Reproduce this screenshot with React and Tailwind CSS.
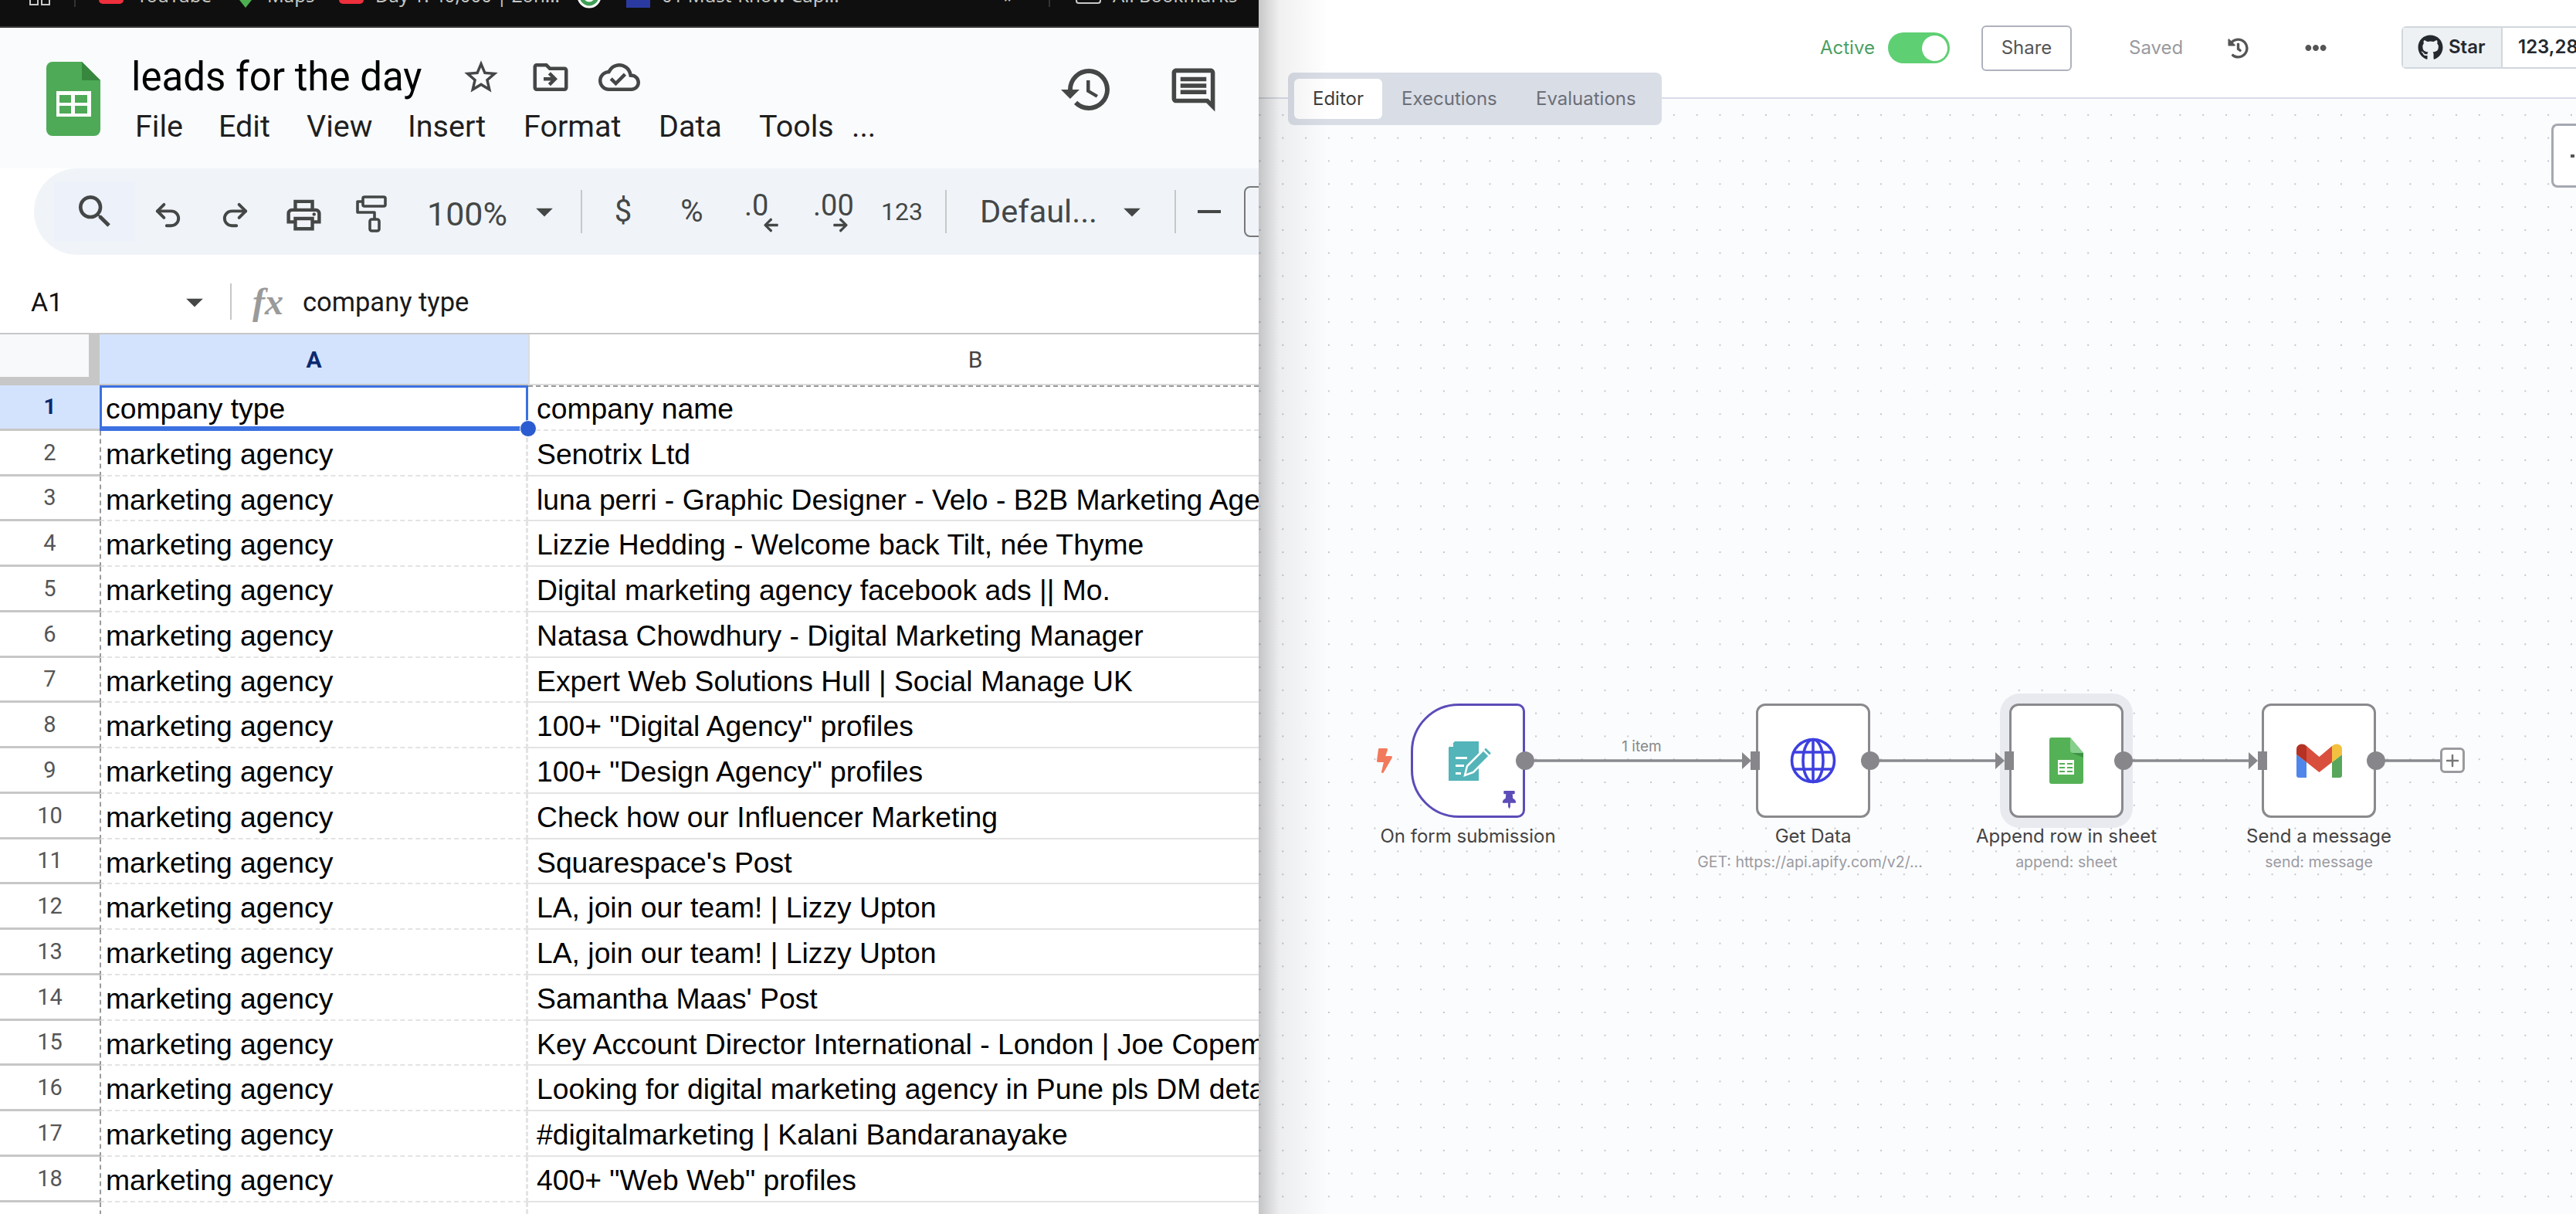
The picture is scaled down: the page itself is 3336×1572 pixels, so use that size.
import { Undo2, Redo2, Plus } from 'lucide-react';
import {
  MdSearch,
  MdOutlinePrint,
  MdOutlineStarBorder,
  MdOutlineDriveFileMove,
  MdOutlineCloudDone,
  MdHistory,
  MdOutlineComment,
  MdArrowDropDown,
} from 'react-icons/md';
import { FaArrowLeft, FaArrowRight, FaBolt, FaGithub, FaThumbtack, FaHistory, FaEllipsisH } from 'react-icons/fa';

const rows = [
  'company name',
  'Senotrix Ltd',
  'luna perri - Graphic Designer - Velo - B2B Marketing Agency',
  'Lizzie Hedding - Welcome back Tilt, née Thyme',
  'Digital marketing agency facebook ads || Mo.',
  'Natasa Chowdhury - Digital Marketing Manager',
  'Expert Web Solutions Hull | Social Manage UK',
  '100+ "Digital Agency" profiles',
  '100+ "Design Agency" profiles',
  'Check how our Influencer Marketing',
  "Squarespace's Post",
  'LA, join our team! | Lizzy Upton',
  'LA, join our team! | Lizzy Upton',
  "Samantha Maas' Post",
  'Key Account Director International - London | Joe Copeman',
  'Looking for digital marketing agency in Pune pls DM details',
  '#digitalmarketing | Kalani Bandaranayake',
  '400+ "Web Web" profiles',
  '',
];

const SheetsLogo = () => (
  <svg width="70" height="96" viewBox="0 0 70 96" className="shrink-0">
    <path d="M8 0h38l24 24v64a8 8 0 0 1-8 8H8a8 8 0 0 1-8-8V8a8 8 0 0 1 8-8z" fill="#4eaa57" />
    <path d="M46 0l24 24H46z" fill="#38873f" />
    <path d="M13 38h45v33H13z" fill="#fff" />
    <path d="M17 43h15v10H17zM37 43h16v10H37zM17 57h15v10H17zM37 57h16v10H37z" fill="#4eaa57" />
  </svg>
);

const PaintIcon = () => (
  <svg width="40" height="48" viewBox="0 0 40 48" fill="none" stroke="#444746" strokeWidth="3.6" strokeLinejoin="round">
    <rect x="9" y="2" width="29" height="12" rx="2" />
    <path d="M9 8H2v14h22v9" />
    <rect x="18" y="31" width="12" height="15" rx="2.5" />
  </svg>
);

const BookmarkBar = () => (
  <div className="flex h-[36px] w-full shrink-0 items-start overflow-hidden border-b-2 border-[#3a3a3a] bg-[#0f0f0f] text-[24px] leading-[24px] whitespace-nowrap text-[#c4c7c5]">
    <div className="ml-[38px] flex shrink-0 gap-[3px]">
      <div className="h-[7px] w-[12px] border-2 border-t-0 border-[#c8c8c8]" />
      <div className="h-[7px] w-[12px] border-2 border-t-0 border-[#c8c8c8]" />
    </div>
    <div className="ml-[31px] h-[9px] w-[2px] shrink-0 bg-[#333]" />
    <div className="ml-[30px] h-[5px] w-[32px] shrink-0 rounded-b-[5px] bg-[#ee2f3c]" />
    <span className="-mt-[18px] ml-[17px] w-[88px] shrink-0">YouTube</span>
    <svg width="16" height="10" className="ml-[45px] shrink-0">
      <path d="M0 0h16L8 10z" fill="#4caf50" />
    </svg>
    <span className="-mt-[18px] ml-[20px] w-[58px] shrink-0">Maps</span>
    <div className="ml-[35px] h-[5px] w-[32px] shrink-0 rounded-b-[5px] bg-[#ee2f3c]" />
    <span className="-mt-[18px] ml-[15px] w-[215px] shrink-0">Day 1: 40,000 | Zoh...</span>
    <svg width="32" height="11" viewBox="0 0 32 11" className="ml-[46px] shrink-0">
      <circle cx="16" cy="-5" r="15.5" fill="#fff" />
      <circle cx="16" cy="-5" r="10" fill="none" stroke="#3f9f56" strokeWidth="5" />
    </svg>
    <div className="ml-[32px] h-[10px] w-[31px] shrink-0 bg-[#2b3aa0]" />
    <span className="-mt-[18px] ml-[15px] w-[227px] shrink-0">01 Must-Know Cap...</span>
    <span className="-mt-[18px] ml-[216px] w-[10px] shrink-0">»</span>
    <div className="ml-[48px] h-[9px] w-[2px] shrink-0 bg-[#333]" />
    <div className="ml-[33px] h-[5px] w-[33px] shrink-0 rounded-b-[4px] border-2 border-t-0 border-[#c8c8c8]" />
    <span className="-mt-[18px] ml-[15px] shrink-0">All Bookmarks</span>
  </div>
);

const TitleBar = () => (
  <div className="flex h-[182px] shrink-0 bg-[#f9fbfd] pt-[39px] pr-[51px] pl-[60px] font-['Roboto',sans-serif]">
    <div className="mt-[5px]">
      <SheetsLogo />
    </div>
    <div className="ml-[40px] flex flex-col">
      <div className="flex h-[50px] items-center text-[#444746]">
        <span className="w-[428px] text-[51px] leading-[50px] text-black">leads for the day</span>
        <MdOutlineStarBorder size={52} className="-ml-[1px]" />
        <MdOutlineDriveFileMove size={54} className="ml-[37px]" />
        <MdOutlineCloudDone size={54} className="ml-[35px]" />
      </div>
      <div className="mt-[20px] flex pl-[5px] text-[39.5px] leading-[38px] text-[#1f1f1f]">
        <span className="w-[108px]">File</span>
        <span className="w-[114px]">Edit</span>
        <span className="w-[131px]">View</span>
        <span className="w-[150px]">Insert</span>
        <span className="w-[175px]">Format</span>
        <span className="w-[130px]">Data</span>
        <span className="w-[120px]">Tools</span>
        <span>...</span>
      </div>
    </div>
    <div className="ml-auto flex h-[82px] items-center gap-[69px] text-[#444746]">
      <MdHistory size={72} />
      <MdOutlineComment size={67} />
    </div>
  </div>
);

const Separator = ({ className }) => <div className={`h-[56px] w-[2px] shrink-0 bg-[#c7c7c7] ${className}`} />;

const Toolbar = () => (
  <div className="ml-[44px] flex h-[112px] shrink-0 items-center overflow-hidden rounded-l-[56px] bg-[#f0f4f9] pl-[26px] font-['Roboto',sans-serif] text-[#444746]">
    <div className="flex h-[78px] w-[105px] shrink-0 items-center justify-center bg-[#edf2fa]">
      <MdSearch size={56} />
    </div>
    <div className="flex w-[85px] shrink-0 justify-center pt-[8px]">
      <Undo2 size={41} strokeWidth={2.3} />
    </div>
    <div className="flex w-[89px] shrink-0 justify-center pt-[8px]">
      <Redo2 size={41} strokeWidth={2.3} />
    </div>
    <div className="flex w-[89px] shrink-0 justify-center pt-[8px]">
      <MdOutlinePrint size={53} />
    </div>
    <div className="flex w-[86px] shrink-0 justify-center pt-[6px]">
      <PaintIcon />
    </div>
    <div className="w-[162px] shrink-0 pt-[6px] text-center text-[43px] leading-[40px]">100%</div>
    <MdArrowDropDown size={52} className="-mx-[7px] shrink-0" />
    <Separator className="ml-[28px]" />
    <div className="ml-[28px] w-[50px] shrink-0 text-center text-[40px] leading-[40px]">$</div>
    <div className="w-[128px] shrink-0 text-center text-[40px] leading-[40px]">%</div>
    <div className="relative h-[50px] w-[52px] shrink-0 pl-[4px] text-[38px] leading-[34px]">
      .0
      <FaArrowLeft size={21} className="absolute top-[32px] left-[28px]" />
    </div>
    <div className="relative ml-[36px] h-[50px] w-[53px] shrink-0 pl-[5px] text-[38px] leading-[34px]">
      .00
      <FaArrowRight size={21} className="absolute top-[32px] left-[30px]" />
    </div>
    <div className="ml-[27px] w-[80px] shrink-0 text-center text-[32px] leading-[40px]">123</div>
    <Separator className="ml-[16px]" />
    <div className="ml-[43px] w-[160px] shrink-0 text-[41.5px] leading-[40px]">Defaul...</div>
    <MdArrowDropDown size={52} className="ml-[11px] -mr-[7px] shrink-0" />
    <Separator className="ml-[36px]" />
    <div className="ml-[28px] h-[4px] w-[30px] shrink-0 bg-[#444746]" />
    <div className="ml-[30px] h-[66px] w-[60px] shrink-0 rounded-[8px] border-2 border-[#777]" />
  </div>
);

const FormulaBar = () => (
  <div className="flex h-[101px] shrink-0 items-center bg-white pt-[20px] font-['Roboto',sans-serif]">
    <span className="ml-[40px] w-[186px] text-[34px] leading-[40px] text-[#111]">A1</span>
    <MdArrowDropDown size={52} className="text-[#444746]" />
    <div className="ml-[20px] h-[47px] w-[2px] bg-[#c7c7c7]" />
    <span className="ml-[27px] w-[65px] font-['Liberation_Serif',serif] text-[48px] leading-[40px] font-bold text-[#9a9a9a] italic">
      fx
    </span>
    <span className="text-[34.5px] leading-[40px] text-[#1a1a1a]">company type</span>
  </div>
);

const SheetGrid = () => (
  <div className="flex min-h-0 flex-1 flex-col overflow-hidden border-t-2 border-[#c7c7c7] bg-white">
    <div className="flex h-[66px] shrink-0 font-['Roboto',sans-serif]">
      <div className="w-[129px] shrink-0 bg-[#c7c7c7] pr-[14px] pb-[11px]">
        <div className="h-full bg-[#f8f9fa]" />
      </div>
      <div className="flex w-[555px] shrink-0 items-center justify-center border-b-2 border-[#c7c7c7] bg-[#d3e3fd] text-[30px] font-bold text-[#0b2a6e]">
        A
      </div>
      <div className="flex w-[1156px] shrink-0 items-center justify-center border-b-2 border-l-2 border-[#dcdcdc] text-[30px] text-[#444]">
        B
      </div>
    </div>
    {rows.map((name, i) => (
      <div key={i} className="flex h-[58.76px] shrink-0 font-['Liberation_Sans',sans-serif] text-[37.3px] leading-[42px] whitespace-nowrap text-black">
        <div
          className={
            i === 0
              ? "flex w-[129px] shrink-0 items-center justify-center border-b-[3px] border-[#c7c7c7] bg-[#d3e3fd] font-['Roboto',sans-serif] text-[28px] font-bold text-[#0b2a6e]"
              : "flex w-[129px] shrink-0 items-center justify-center border-b-[3px] border-[#c7c7c7] font-['Roboto',sans-serif] text-[29px] text-[#555]"
          }
        >
          {i + 1}
        </div>
        <div
          className={
            i === 0
              ? 'relative w-[555px] shrink-0 border-[3px] border-b-[6px] border-[#3b71e0] pt-[6px] pl-[5px]'
              : 'w-[555px] shrink-0 border-r-[3px] border-b-2 border-l-2 border-r-[#e3e3e3] border-b-[#e3e3e3] border-l-[#9a9a9a] border-dashed pt-[9px] pl-[6px]'
          }
        >
          {i === 0 ? 'company type' : i === 18 ? '' : 'marketing agency'}
          {i === 0 && <div className="absolute -right-[14px] -bottom-[14px] h-[22px] w-[22px] rounded-full border border-white bg-[#2a5bd0]" />}
        </div>
        <div
          className={
            i === 0
              ? 'flex-1 overflow-hidden border-t-2 border-b-2 border-t-[#9a9a9a] border-b-[#e3e3e3] border-dashed pt-[7px] pl-[11px]'
              : 'flex-1 overflow-hidden border-b-2 border-[#e3e3e3] pt-[9px] pl-[11px]'
          }
        >
          {name}
        </div>
      </div>
    ))}
  </div>
);

const N8nHeader = () => (
  <div className="flex h-[128px] shrink-0 border-b-2 border-[#d9dde8] bg-white pl-[727px] font-['Inter',sans-serif] text-[24px] leading-[32px]">
    <div className="flex items-center pb-[2px]">
      <span className="w-[88px] text-[#4c9f63]">Active</span>
      <div className="flex h-[40px] w-[80px] items-center justify-end rounded-full bg-[#5fcf73] pr-[3px]">
        <div className="h-[33px] w-[33px] rounded-full bg-white" />
      </div>
      <button className="ml-[41px] h-[59px] w-[117px] rounded-[6px] border-2 border-[#aeb2be] text-[#555]">Share</button>
      <span className="ml-[74px] w-[71px] text-[#9a9aa0]">Saved</span>
      <FaHistory size={27} className="ml-[57px] text-[#555]" />
      <FaEllipsisH size={28} className="ml-[73px] text-[#555]" />
    </div>
    <div className="ml-[56px] w-[2px] bg-[#dfe2e9]" />
    <div className="mb-[4px] ml-[41px] flex h-[55px] w-[300px] shrink-0 self-center rounded-[6px] border-2 border-[#d1d7de]">
      <div className="flex w-[129px] items-center gap-[7px] border-r-2 border-[#d1d7de] bg-[#eef1f4] pl-[19px] font-semibold text-[#24292f]">
        <FaGithub size={33} />
        Star
      </div>
      <div className="flex items-center pl-[20px] font-semibold text-[#24292f]">123,287</div>
    </div>
  </div>
);

const Node = ({ className, shape, label, sub, subClass, children }) => (
  <div className={`absolute top-[783px] h-[148px] w-[148px] ${className}`}>
    <div className={`flex h-full w-full items-center justify-center border-[3px] bg-white ${shape}`}>{children}</div>
    <div className="absolute top-[156px] left-1/2 -translate-x-1/2 text-center text-[24px] leading-[32px] whitespace-nowrap text-[#444]">{label}</div>
    {sub && (
      <div className={`absolute top-[192px] left-1/2 -translate-x-1/2 text-center text-[19.5px] leading-[26px] whitespace-nowrap text-[#9a9aa0] ${subClass || ''}`}>
        {sub}
      </div>
    )}
  </div>
);

const FormIcon = () => (
  <svg width="56" height="52" viewBox="0 0 56 52" className="ml-[5px]">
    <path d="M8 1h31v51H0V9z" fill="#53b4b9" />
    <path d="M6 3v5H1z" fill="#fff" />
    <path d="M9 21h15v3H9zM9 31h11v3H9zM9 41h7v3H9z" fill="#fff" />
    <path d="M21 45l3-12 21-21 8 8-21 21z" fill="#53b4b9" stroke="#fff" strokeWidth="2.5" />
    <path d="M45 12l3-4 8 8-3 4z" fill="#53b4b9" stroke="#fff" strokeWidth="2" />
  </svg>
);

const GlobeIcon = () => (
  <svg width="60" height="60" viewBox="0 0 60 60" fill="none" stroke="#3d3fe0" strokeWidth="3.6">
    <circle cx="30" cy="30" r="27.5" />
    <ellipse cx="30" cy="30" rx="13" ry="27.5" />
    <path d="M30 2.5v55M5.5 19h49M5.5 41h49" />
  </svg>
);

const SheetIcon = () => (
  <svg width="44" height="60" viewBox="0 0 44 60">
    <path d="M3 0h24l17 20v37a3 3 0 0 1-3 3H3a3 3 0 0 1-3-3V3a3 3 0 0 1 3-3z" fill="#55b156" />
    <path d="M27 0l17 20H31a4 4 0 0 1-4-4z" fill="#86cf8d" />
    <path d="M29 20h15v6z" fill="#3f9146" />
    <path d="M11 29h21v19H11z" fill="#fff" />
    <path d="M13 33h7v2h-7zM23 33h7v2h-7zM13 38h7v2h-7zM23 38h7v2h-7zM13 43h7v2h-7zM23 43h7v2h-7z" fill="#55b156" />
  </svg>
);

const GmailIcon = () => (
  <svg width="59" height="44" viewBox="0 0 59 44">
    <path d="M0 14l13 10v20H3a3 3 0 0 1-3-3z" fill="#4f86ec" />
    <path d="M59 14L46 24v20h10a3 3 0 0 0 3-3z" fill="#58a65c" />
    <path d="M13 3l16.5 14L46 3v21L29.5 37 13 24z" fill="#d94f3d" />
    <path d="M0 7c0-6 8-9 13-4v21L0 14z" fill="#b53224" />
    <path d="M59 7c0-6-8-9-13-4v21l13-10z" fill="#f3c13f" />
  </svg>
);

const Canvas = () => (
  <div className="relative min-h-0 flex-1 overflow-hidden bg-[#fbfcfe] bg-[radial-gradient(circle,#c4c7d0_1px,transparent_1.2px)] bg-[size:29.8px_29.8px] bg-[position:-13.4px_6px] font-['Inter',sans-serif]">
    {/* collapsed side panel tab */}
    <div className="absolute top-[32px] right-0 flex h-[83px] w-[32px] items-center justify-end rounded-l-[8px] border-[3px] border-r-0 border-[#a5a8b2] bg-white pr-[2px]">
      <div className="h-[4px] w-[5px] bg-[#555]" />
    </div>

    <FaBolt size={32} className="absolute top-[841px] left-[147px] text-[#f27a5c]" />
    <div className="absolute top-[770px] left-[960px] h-[174px] w-[172px] rounded-[26px] bg-[#e8eaf0]" />

    <Node className="left-[197px]" shape="rounded-l-[62px] rounded-r-[10px] border-[#5b4cb8]" label="On form submission">
      <FormIcon />
      <FaThumbtack size={23} className="absolute right-[9px] bottom-[12px] text-[#5b4cb8]" />
    </Node>
    <div className="absolute top-[827px] left-[459px] w-[74px] text-center text-[19px] leading-[24px] text-[#888]">1 item</div>
    <Node className="left-[644px]" shape="rounded-[12px] border-[#8a8a8e]" label="Get Data" sub="GET: https://api.apify.com/v2/..." subClass="-ml-[4px]">
      <GlobeIcon />
    </Node>
    <Node className="left-[972px]" shape="rounded-[12px] border-[#8a8a8e]" label="Append row in sheet" sub="append: sheet">
      <SheetIcon />
    </Node>
    <Node className="left-[1299px]" shape="rounded-[12px] border-[#8a8a8e]" label="Send a message" sub="send: message">
      <GmailIcon />
    </Node>

    {/* connections and ports */}
    <svg width="1706" height="1444" className="pointer-events-none absolute top-0 left-0">
      <g stroke="#8a8a8e" strokeWidth="3.5">
        <path d="M345 857H628M792 857H956M1120 857H1284M1447 857H1531" />
      </g>
      <g fill="#87878b">
        <circle cx="345" cy="857" r="12" />
        <circle cx="792" cy="857" r="12" />
        <circle cx="1120" cy="857" r="12" />
        <circle cx="1447" cy="857" r="12" />
        <path d="M626 846l12 11-12 11zM954 846l12 11-12 11zM1282 846l12 11-12 11z" />
        <rect x="637" y="845" width="12" height="24" />
        <rect x="966" y="845" width="12" height="24" />
        <rect x="1294" y="845" width="12" height="24" />
      </g>
    </svg>

    <div className="absolute top-[840px] left-[1530px] flex h-[33px] w-[32px] items-center justify-center rounded-[6px] border-[3px] border-[#9a9aa0] bg-white text-[#777]">
      <Plus size={24} strokeWidth={2.5} />
    </div>
  </div>
);

const Tabs = () => (
  <div className="absolute top-[94px] left-[38px] flex h-[68px] w-[484px] items-center rounded-[8px] bg-[#d9dde6] pl-[8px] font-['Inter',sans-serif] text-[24px] leading-[32px] text-[#6b6f78]">
    <div className="flex h-[52px] w-[114px] items-center justify-center rounded-[6px] bg-white text-[#3d3d3d]">Editor</div>
    <span className="ml-[25px] w-[174px]">Executions</span>
    <span>Evaluations</span>
  </div>
);

export default function App() {
  return (
    <div className="flex h-[1572px] w-[3336px] overflow-hidden bg-white">
      <div className="flex h-full w-[1630px] shrink-0 flex-col overflow-hidden">
        <BookmarkBar />
        <TitleBar />
        <Toolbar />
        <FormulaBar />
        <SheetGrid />
      </div>
      <div className="relative flex min-w-0 flex-1 flex-col">
        <N8nHeader />
        <Canvas />
        <Tabs />
        {/* window shadow from the sheet on top */}
        <div className="pointer-events-none absolute inset-y-0 left-0 w-[90px] bg-[linear-gradient(to_right,#00000038,#0000000f_30%,transparent)]" />
      </div>
    </div>
  );
}
